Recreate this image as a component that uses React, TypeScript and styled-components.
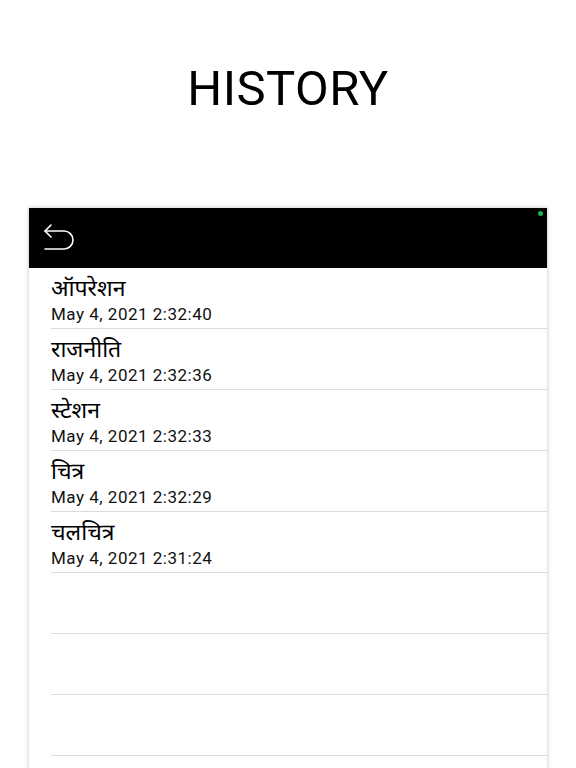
import React from "react";
import styled, { createGlobalStyle } from "styled-components";

const GlobalStyle = createGlobalStyle`
  html, body {
    margin: 0;
    padding: 0;
    background: #fff;
  }
  body {
    width: 576px;
    height: 768px;
    overflow: hidden;
    font-family: Roboto, "Noto Sans", "Liberation Sans", sans-serif;
  }
`;

const Page = styled.div`
  display: flex;
  flex-direction: column;
  height: 768px;
  overflow: hidden;
`;

const Title = styled.h1`
  margin: 0;
  flex-shrink: 0;
  height: 208px;
  display: flex;
  align-items: center;
  justify-content: center;
  padding-bottom: 32px;
  box-sizing: border-box;
  font-size: 49px;
  font-weight: 400;
  color: #000;
  letter-spacing: 0.5px;
`;

const Card = styled.div`
  margin: 0 29px;
  flex: 1 0 auto;
  background: #fff;
  box-shadow: 0 0 4px rgba(0, 0, 0, 0.25);
  display: flex;
  flex-direction: column;
`;

const Header = styled.div`
  position: relative;
  flex-shrink: 0;
  height: 60px;
  background: #000;
  display: flex;
  align-items: center;
  padding-left: 14px;
`;

const StatusDot = styled.span`
  position: absolute;
  top: 3px;
  right: 4px;
  width: 5px;
  height: 5px;
  border-radius: 50%;
  background: #1fb24a;
`;

const BackButton = styled.button`
  background: none;
  border: 0;
  padding: 0;
  cursor: pointer;
  display: flex;
`;

const List = styled.div`
  display: flex;
  flex-direction: column;
`;

const Row = styled.div`
  flex-shrink: 0;
  height: 61px;
  margin-left: 22px;
  border-bottom: 1px solid #dcdcdc;
  box-sizing: border-box;
  padding-top: 9px;
`;

const Word = styled.div`
  font-family: "Noto Sans Devanagari", "Noto Sans", sans-serif;
  font-size: 23px;
  line-height: 26px;
  color: #000;
`;

const Stamp = styled.div`
  font-size: 17px;
  line-height: 22px;
  color: #111;
  letter-spacing: 0.5px;
`;

const entries = [
  { word: "ऑपरेशन", time: "May 4, 2021 2:32:40" },
  { word: "राजनीति", time: "May 4, 2021 2:32:36" },
  { word: "स्टेशन", time: "May 4, 2021 2:32:33" },
  { word: "चित्र", time: "May 4, 2021 2:32:29" },
  { word: "चलचित्र", time: "May 4, 2021 2:31:24" },
];

function BackIcon() {
  return (
    <svg width="34" height="32" viewBox="0 0 34 32" fill="none">
      <path
        d="M2 9 H21 A9 9 0 0 1 21 27 H2"
        stroke="#fff"
        strokeWidth="1.6"
        strokeLinecap="round"
      />
      <path
        d="M8 3 L2 9 L8 15"
        stroke="#fff"
        strokeWidth="1.6"
        strokeLinecap="round"
        strokeLinejoin="round"
      />
    </svg>
  );
}

export default function App() {
  return (
    <>
      <GlobalStyle />
      <Page>
        <Title>HISTORY</Title>
        <Card>
          <Header>
            <BackButton aria-label="Back">
              <BackIcon />
            </BackButton>
            <StatusDot />
          </Header>
          <List>
            {entries.map((e) => (
              <Row key={e.time}>
                <Word>{e.word}</Word>
                <Stamp>{e.time}</Stamp>
              </Row>
            ))}
            {[0, 1, 2, 3].map((i) => (
              <Row key={"empty" + i} />
            ))}
          </List>
        </Card>
      </Page>
    </>
  );
}
